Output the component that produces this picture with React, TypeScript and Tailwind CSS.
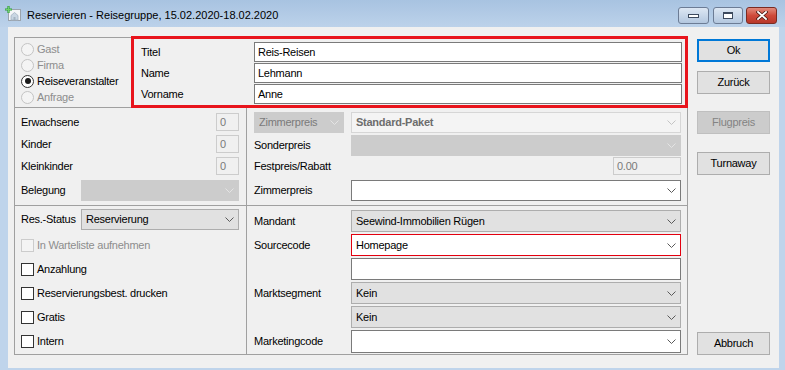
import React from "react";

type Tone = "white" | "gray" | "disabled" | "light";

const toneCls: Record<Tone, string> = {
  white: "bg-white border-[#7a7a7a] text-black",
  gray: "bg-[#e1e1e1] border-[#adadad] text-black",
  disabled: "bg-[#cccccc] border-[#cccccc] text-[#7a7a7a]",
  light: "bg-[#f4f4f4] border-[#d6d6d6] text-[#6d6d6d]",
};
const toneChev: Record<Tone, string> = {
  white: "#5a5a5a",
  gray: "#5a5a5a",
  disabled: "#e4e4e4",
  light: "#c4c4c4",
};

function Chevron({ color }: { color: string }) {
  return (
    <svg width="9" height="5" viewBox="0 0 9 5" className="shrink-0">
      <path d="M0.5 0.5L4.5 4.5L8.5 0.5" fill="none" stroke={color} strokeWidth="1" />
    </svg>
  );
}

function Combo({
  text = "",
  tone,
  className = "",
  bold = false,
}: {
  text?: string;
  tone: Tone;
  className?: string;
  bold?: boolean;
}) {
  return (
    <div className={`flex items-center border pl-[4px] pr-[4px] ${toneCls[tone]} ${className}`}>
      <span className={`flex-1 truncate leading-none ${bold ? "font-bold" : ""}`}>{text}</span>
      <Chevron color={toneChev[tone]} />
    </div>
  );
}

function TextBox({
  value = "",
  disabled = false,
  className = "",
}: {
  value?: string;
  disabled?: boolean;
  className?: string;
}) {
  return (
    <div
      className={`flex items-center border pl-[3px] leading-none ${
        disabled ? "bg-[#f0f0f0] border-[#cccccc] text-[#7a7a7a]" : "bg-white border-[#7a7a7a] text-black"
      } ${className}`}
    >
      {value}
    </div>
  );
}

function Radio({ label, checked = false, disabled = false }: { label: string; checked?: boolean; disabled?: boolean }) {
  return (
    <div className="h-[16px] flex items-center">
      <span
        className={`w-[13px] h-[13px] rounded-full border flex items-center justify-center ${
          disabled ? "border-[#c4c4c4] bg-[#f4f4f4]" : "border-[#333333] bg-white"
        }`}
      >
        {checked && <span className="w-[6px] h-[6px] rounded-full bg-[#1a1a1a]" />}
      </span>
      <span className={`ml-[3px] leading-none ${disabled ? "text-[#8d8d8d]" : "text-black"}`}>{label}</span>
    </div>
  );
}

function Check({ label, disabled = false }: { label: string; disabled?: boolean }) {
  return (
    <div className="h-[24px] flex items-center">
      <span
        className={`w-[13px] h-[13px] border ${
          disabled ? "border-[#cccccc] bg-[#f4f4f4]" : "border-[#333333] bg-white"
        }`}
      />
      <span className={`ml-[3px] leading-none ${disabled ? "text-[#8d8d8d]" : "text-black"}`}>{label}</span>
    </div>
  );
}

function Btn({
  label,
  className = "",
  kind = "normal",
}: {
  label: string;
  className?: string;
  kind?: "normal" | "default" | "disabled";
}) {
  const k =
    kind === "default"
      ? "border-2 border-[#0078d7] bg-[#e1e1e1] text-black"
      : kind === "disabled"
      ? "border border-[#bfbfbf] bg-[#cccccc] text-[#838383]"
      : "border border-[#adadad] bg-[#e1e1e1] text-black";
  return (
    <div className={`w-[73px] h-[23px] flex items-center justify-center leading-none ${k} ${className}`}>{label}</div>
  );
}

function AppIcon() {
  return (
    <svg width="17" height="17" viewBox="0 0 17 17">
      <rect x="3.5" y="4.5" width="12" height="11" fill="#f4f6f8" stroke="#9aa3ad" />
      <path d="M6 15V10.5L9.5 7.5L13 10.5V15Z" fill="#c9d6e3" stroke="#a4b3c2" strokeWidth="0.8" />
      <rect x="8.5" y="12" width="2" height="3" fill="#a4b3c2" />
      <path d="M3.5 1V8M0 4.5H7" stroke="#2f9a3a" strokeWidth="2.2" />
      <path d="M3.5 1.5V7.5M0.5 4.5H6.5" stroke="#6fd06a" strokeWidth="1" />
    </svg>
  );
}

function TitleButtons() {
  return (
    <div className="flex self-start mt-[7px] mr-[8px] ml-auto">
      <div className="w-[31px] h-[17px] rounded-[3px] border border-[#6c7c95] bg-gradient-to-b from-[#dde7f3] to-[#b3c7df] flex items-end justify-center pb-[5px]">
        <div className="w-[11px] h-[4px] bg-white border border-[#3d4a5e]" />
      </div>
      <div className="w-[30px] h-[17px] ml-[4px] rounded-[3px] border border-[#6c7c95] bg-gradient-to-b from-[#dde7f3] to-[#b3c7df] flex items-center justify-center">
        <div className="w-[10px] h-[7px] bg-white border border-[#3d4a5e] border-t-2" />
      </div>
      <div className="w-[31px] h-[17px] ml-[3px] rounded-[3px] border border-[#7a2b22] bg-gradient-to-b from-[#e08a7c] via-[#cf4a3a] to-[#b8372a] flex items-center justify-center">
        <svg width="12" height="9" viewBox="0 0 12 9">
          <path d="M2 1L10 8M10 1L2 8" stroke="#4a1a14" strokeWidth="3.4" strokeLinecap="square" />
          <path d="M2 1L10 8M10 1L2 8" stroke="#ffffff" strokeWidth="1.8" strokeLinecap="square" />
        </svg>
      </div>
    </div>
  );
}

export default function App() {
  return (
    <div className="w-[785px] h-[370px] overflow-hidden bg-[#bfd4eb] flex flex-col font-['Liberation_Sans',Arial,sans-serif] text-[11px] tracking-[-0.25px] text-black">
      {/* Title bar */}
      <div className="h-[27px] shrink-0 flex items-start bg-gradient-to-b from-[#a8c3e1] to-[#bcd2ea]">
        <div className="ml-[5px] mt-[5px]">
          <AppIcon />
        </div>
        <div className="ml-[5px] mt-[7px] text-[11px] leading-[16px] tracking-normal text-black">
          Reservieren - Reisegruppe, 15.02.2020-18.02.2020
        </div>
        <TitleButtons />
      </div>

      {/* Client area */}
      <div className="ml-[8px] mr-[6px] h-[341px] bg-[#f0f0f0] flex pl-[6px]">
        {/* Main form */}
        <div className="w-[674px] mt-[9px] flex flex-col">
          {/* Top row */}
          <div className="h-[72px] flex">
            <div className="w-[117px] h-[71px] mt-[1px] border-l border-t border-b border-[#a0a0a0] pl-[6px] pt-[3px] flex flex-col">
              <Radio label="Gast" disabled />
              <Radio label="Firma" disabled />
              <Radio label="Reiseveranstalter" checked />
              <Radio label="Anfrage" disabled />
            </div>
            <div className="w-[557px] h-[72px] border-[3px] border-[#e8141c] pt-[3px] pl-[7px] pr-[3px] flex flex-col gap-[1px]">
              {[
                ["Titel", "Reis-Reisen"],
                ["Name", "Lehmann"],
                ["Vorname", "Anne"],
              ].map(([l, v]) => (
                <div key={l} className="h-[20px] flex items-center">
                  <span className="w-[113px] shrink-0">{l}</span>
                  <TextBox value={v} className="flex-1 h-[20px]" />
                </div>
              ))}
            </div>
          </div>

          {/* Middle */}
          <div className="h-[247px] flex">
            {/* Left column */}
            <div className="w-[233px] border-l border-r border-b border-[#a0a0a0] flex flex-col">
              <div className="h-[98px] border-b border-[#a0a0a0] pl-[6px] pr-[7px] pt-[5px] flex flex-col gap-[4px]">
                {["Erwachsene", "Kinder", "Kleinkinder"].map((l) => (
                  <div key={l} className="h-[18px] flex items-center justify-between">
                    <span>{l}</span>
                    <TextBox value="0" disabled className="w-[23px] h-[18px]" />
                  </div>
                ))}
                <div className="h-[21px] mt-[1px] flex items-center">
                  <span className="w-[60px] shrink-0">Belegung</span>
                  <Combo tone="disabled" className="flex-1 h-[21px]" />
                </div>
              </div>
              <div className="flex-1 pl-[6px] pr-[7px] pt-[3px] flex flex-col">
                <div className="h-[21px] flex items-center">
                  <span className="w-[60px] shrink-0">Res.-Status</span>
                  <Combo tone="gray" text="Reservierung" className="flex-1 h-[21px]" />
                </div>
                <div className="mt-[3px] flex flex-col">
                  <Check label="In Warteliste aufnehmen" disabled />
                  <Check label="Anzahlung" />
                  <Check label="Reservierungsbest. drucken" />
                  <Check label="Gratis" />
                  <Check label="Intern" />
                </div>
              </div>
            </div>

            {/* Center column */}
            <div className="w-[441px] border-r border-b border-[#a0a0a0] flex flex-col">
              <div className="h-[98px] border-b border-[#a0a0a0] pl-[7px] pr-[6px] pt-[4px] flex flex-col">
                <div className="h-[21px] flex items-center">
                  <Combo tone="disabled" text="Zimmerpreis" className="w-[90px] h-[21px]" />
                  <Combo tone="light" text="Standard-Paket" bold className="ml-[7px] flex-1 h-[21px]" />
                </div>
                <div className="h-[21px] mt-[2px] flex items-center">
                  <span className="w-[97px] shrink-0">Sonderpreis</span>
                  <Combo tone="disabled" className="flex-1 h-[21px]" />
                </div>
                <div className="h-[18px] mt-[1px] flex items-center justify-between">
                  <span>Festpreis/Rabatt</span>
                  <TextBox value="0.00" disabled className="w-[68px] h-[18px]" />
                </div>
                <div className="h-[21px] mt-[5px] flex items-center">
                  <span className="w-[97px] shrink-0">Zimmerpreis</span>
                  <Combo tone="white" className="flex-1 h-[21px]" />
                </div>
              </div>
              <div className="flex-1 pl-[7px] pr-[6px] pt-[4px] flex flex-col gap-[2px]">
                <div className="h-[22px] flex items-center">
                  <span className="w-[97px] shrink-0">Mandant</span>
                  <Combo tone="gray" text="Seewind-Immobilien Rügen" className="flex-1 h-[22px]" />
                </div>
                <div className="h-[22px] flex items-center">
                  <span className="w-[97px] shrink-0">Sourcecode</span>
                  <div className="flex-1 h-[22px] flex items-center border border-[#e3000f] bg-white pl-[4px] pr-[4px]">
                    <span className="flex-1 leading-none">Homepage</span>
                    <Chevron color="#5a5a5a" />
                  </div>
                </div>
                <div className="h-[22px] flex items-center">
                  <span className="w-[97px] shrink-0" />
                  <TextBox className="flex-1 h-[22px]" />
                </div>
                <div className="h-[22px] flex items-center">
                  <span className="w-[97px] shrink-0">Marktsegment</span>
                  <Combo tone="gray" text="Kein" className="flex-1 h-[22px]" />
                </div>
                <div className="h-[22px] flex items-center">
                  <span className="w-[97px] shrink-0" />
                  <Combo tone="gray" text="Kein" className="flex-1 h-[22px]" />
                </div>
                <div className="h-[22px] flex items-center">
                  <span className="w-[97px] shrink-0">Marketingcode</span>
                  <Combo tone="white" className="flex-1 h-[23px]" />
                </div>
              </div>
            </div>
          </div>
        </div>

        {/* Buttons */}
        <div className="ml-[9px] mt-[12px] flex flex-col">
          <Btn label="Ok" kind="default" />
          <Btn label="Zurück" className="mt-[9px]" />
          <Btn label="Flugpreis" kind="disabled" className="mt-[17px]" />
          <Btn label="Turnaway" className="mt-[18px]" />
          <Btn label="Abbruch" className="mt-[157px]" />
        </div>
      </div>
    </div>
  );
}
